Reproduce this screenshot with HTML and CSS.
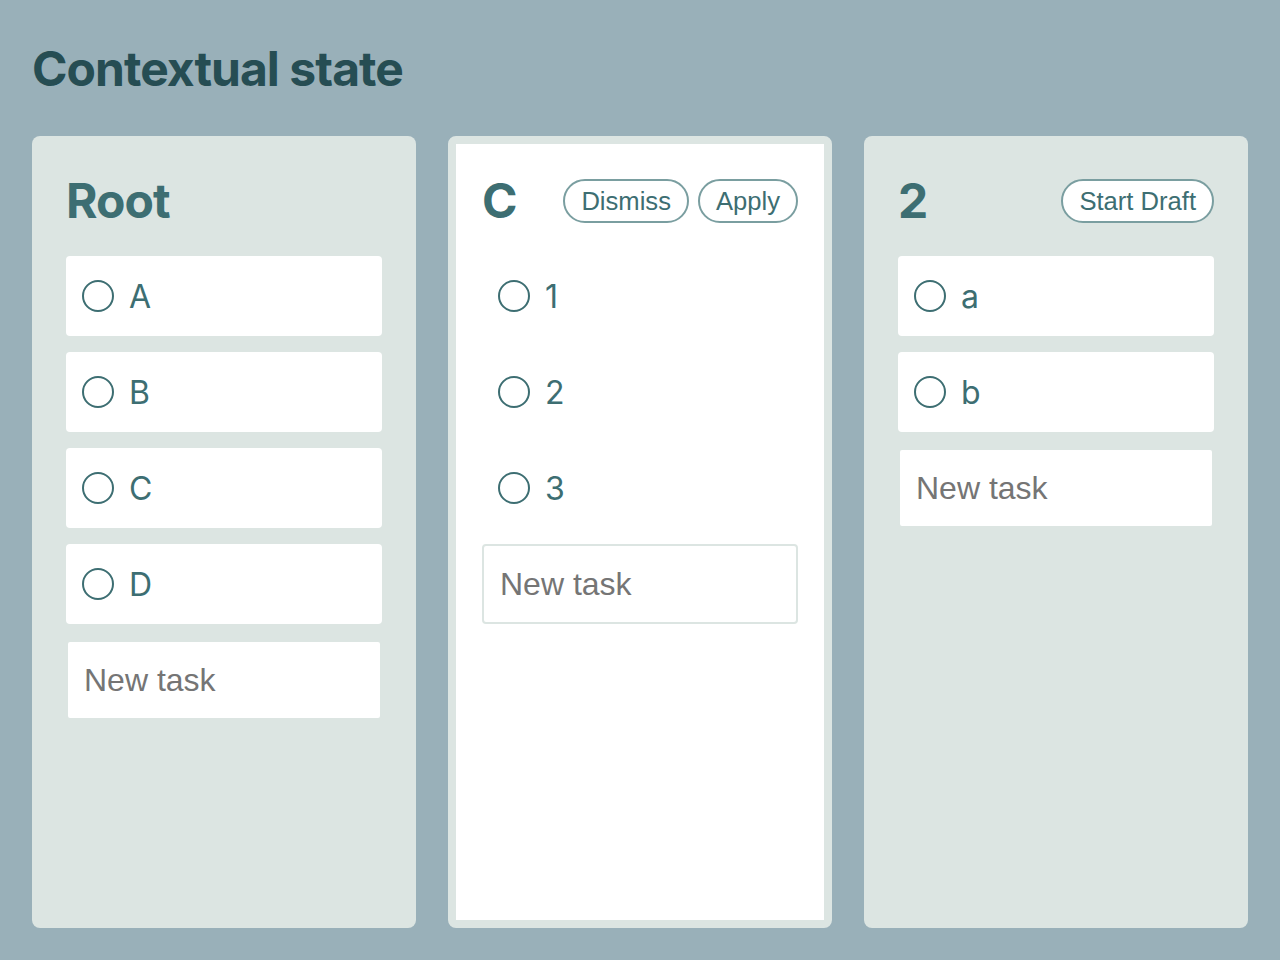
FILE: index.html
```html
<!DOCTYPE html>
<html lang="en">
<head>
<meta charset="utf-8">
<title>Contextual state</title>
<link rel="stylesheet" href="styles.css">
</head>
<body>
<main class="page">
  <h1 class="title">Contextual state</h1>
  <div class="board">
    <section class="column">
      <header class="col-head">
        <h2 class="col-title">Root</h2>
      </header>
      <ul class="tasks">
        <li class="task"><span class="radio"></span><span class="label">A</span></li>
        <li class="task"><span class="radio"></span><span class="label">B</span></li>
        <li class="task"><span class="radio"></span><span class="label">C</span></li>
        <li class="task"><span class="radio"></span><span class="label">D</span></li>
      </ul>
      <input class="new-task" type="text" placeholder="New task">
    </section>
    <section class="column column-active">
      <header class="col-head">
        <h2 class="col-title">C</h2>
        <div class="actions">
          <button class="pill" type="button">Dismiss</button>
          <button class="pill" type="button">Apply</button>
        </div>
      </header>
      <ul class="tasks">
        <li class="task"><span class="radio"></span><span class="label">1</span></li>
        <li class="task"><span class="radio"></span><span class="label">2</span></li>
        <li class="task"><span class="radio"></span><span class="label">3</span></li>
      </ul>
      <input class="new-task" type="text" placeholder="New task">
    </section>
    <section class="column">
      <header class="col-head">
        <h2 class="col-title">2</h2>
        <div class="actions">
          <button class="pill" type="button">Start Draft</button>
        </div>
      </header>
      <ul class="tasks">
        <li class="task"><span class="radio"></span><span class="label">a</span></li>
        <li class="task"><span class="radio"></span><span class="label">b</span></li>
      </ul>
      <input class="new-task" type="text" placeholder="New task">
    </section>
  </div>
</main>
</body>
</html>
```

FILE: styles.css
```css
* { box-sizing: border-box; }

html, body {
  margin: 0;
  padding: 0;
}

body {
  background: #99b0b9;
  font-family: Inter, "Liberation Sans", sans-serif;
  color: #3d6e72;
}

.page {
  height: 960px;
  padding: 40px 32px 32px;
  display: flex;
  flex-direction: column;
}

.title {
  margin: 0 0 38px;
  font-size: 48px;
  line-height: 58px;
  font-weight: 700;
  color: #264d53;
  letter-spacing: -0.95px;
}

.board {
  flex: 1;
  display: grid;
  grid-template-columns: repeat(3, 1fr);
  gap: 32px;
}

.column {
  background: #dce5e2;
  border-radius: 8px;
  padding: 34px;
  display: flex;
  flex-direction: column;
  gap: 16px;
}

.column-active {
  border: 8px solid #dce5e2;
  background: #ffffff;
  padding: 26px;
}

.col-head {
  height: 62px;
  margin-bottom: 8px;
  display: flex;
  align-items: center;
  justify-content: space-between;
}

.col-title {
  margin: 0;
  font-size: 48px;
  line-height: 58px;
  font-weight: 700;
  color: #3d6e72;
  letter-spacing: -0.9px;
}

.actions {
  display: flex;
  gap: 9px;
}

.pill {
  font-family: "Liberation Sans", Arial, sans-serif;
  font-size: 25.6px;
  line-height: 32px;
  color: #3d6e72;
  background: #ffffff;
  border: 2px solid #7a9ea0;
  border-radius: 999px;
  padding: 4px 16px;
  margin: 0;
}

.tasks {
  list-style: none;
  margin: 0;
  padding: 0;
  display: flex;
  flex-direction: column;
  gap: 16px;
}

.task {
  height: 80px;
  background: #ffffff;
  border-radius: 4px;
  padding: 2px 16px 0;
  display: flex;
  align-items: center;
  gap: 15px;
}

.radio {
  width: 32px;
  height: 32px;
  border: 2px solid #3d6e72;
  border-radius: 50%;
  flex: none;
  margin-top: -2px;
}

.label {
  font-size: 32px;
  line-height: 40px;
  font-weight: 400;
  color: #3d6e72;
}

.new-task {
  width: 100%;
  height: 80px;
  border: 2px solid #dce5e2;
  border-radius: 4px;
  background: #ffffff;
  padding: 0 16px;
  font-family: "Liberation Sans", Arial, sans-serif;
  font-size: 32px;
  color: #333;
  outline: none;
}

.new-task::placeholder {
  color: #757575;
}
```
